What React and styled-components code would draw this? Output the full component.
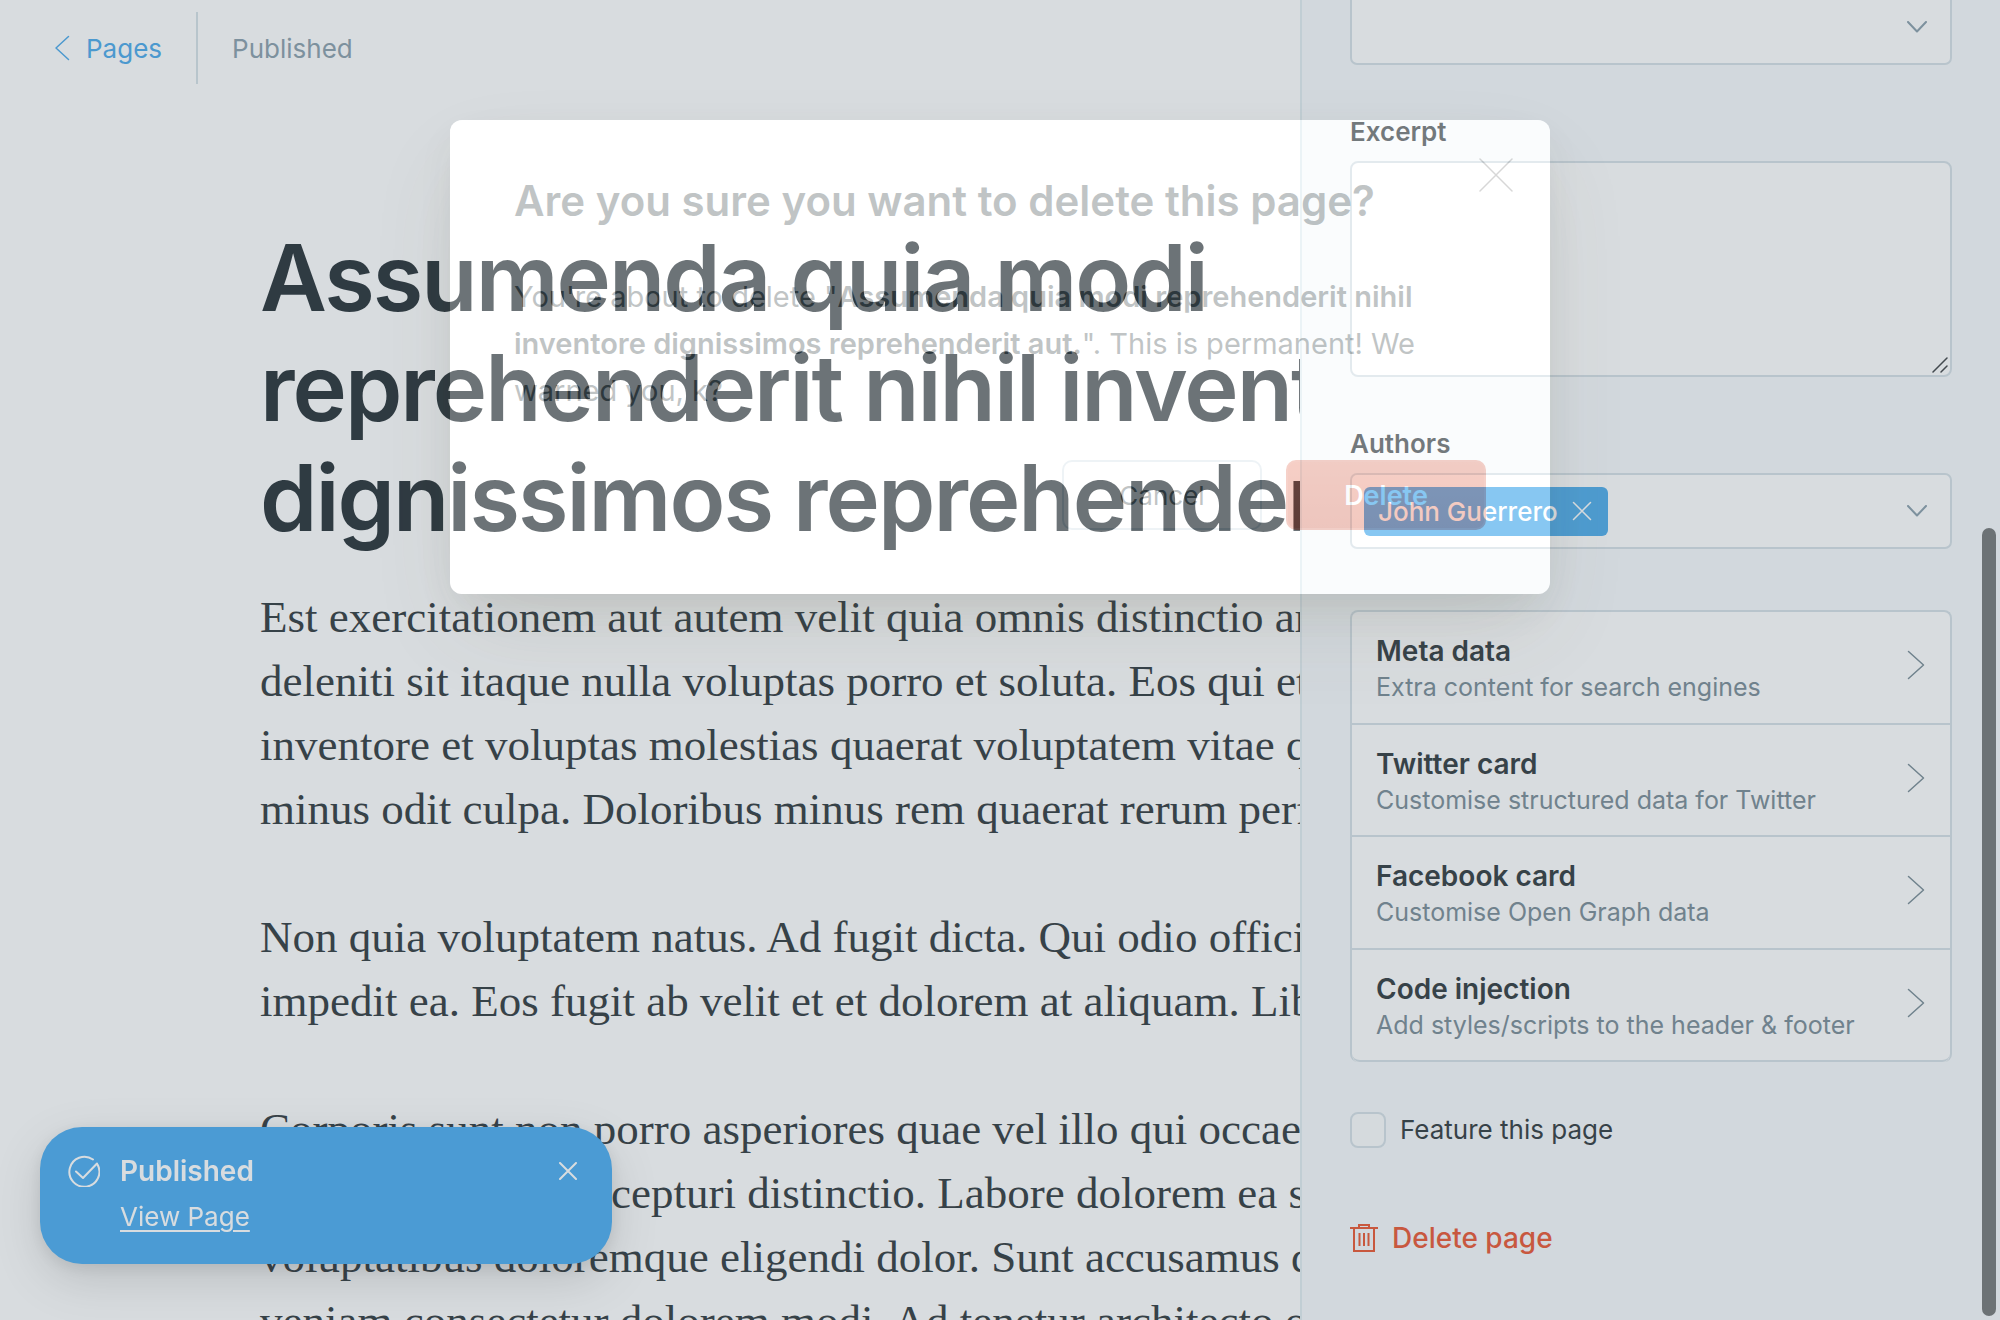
import React from "react";
import styled, { createGlobalStyle } from "styled-components";

const sans = `Inter, "Liberation Sans", sans-serif`;
const serif = `Georgia, "Liberation Serif", serif`;
const ink = "#1a252a";
const line = "#d2dde4";

const Global = createGlobalStyle`
  *, *::before, *::after { box-sizing: border-box; }
  body { margin: 0; background: #fff; font-family: ${sans}; color: ${ink}; }
  h1, h2, p, ul { margin: 0; padding: 0; }
  button, input, select, textarea { font: inherit; color: inherit; margin: 0; padding: 0; }
  button { background: none; border: 0; cursor: pointer; }
`;

const Layout = styled.div`
  display: grid;
  grid-template-columns: minmax(0, 1fr) 700px;
  height: 100vh;
  overflow: hidden;
`;

const Editor = styled.main`
  min-width: 0;
  overflow: hidden;
`;

const TopBar = styled.header`
  display: flex;
  align-items: center;
  height: 72px;
  margin-top: 12px;
  padding-left: 54px;
  font-size: 26px;
`;

const BackLink = styled.a`
  display: flex;
  align-items: center;
  gap: 16px;
  height: 100%;
  padding-right: 34px;
  border-right: 2px solid #d2dfe4;
  color: #38a0e8;
  text-decoration: none;
`;

const Status = styled.span`
  padding-left: 34px;
  color: #7e95a3;
`;

const Article = styled.article`
  padding: 139px 0 0 260px;
  white-space: nowrap;
`;

const Title = styled.h1`
  margin-bottom: 32px;
  color: #101b21;
  font-size: 92px;
  font-weight: 600;
  line-height: 110px;
  letter-spacing: -2px;
`;

const Paragraph = styled.p`
  margin-bottom: 64px;
  font-family: ${serif};
  font-size: 45px;
  line-height: 64px;
`;

const Line = styled.span`
  display: block;
`;

const Sidebar = styled.aside`
  display: flex;
  flex-direction: column;
  justify-content: flex-end;
  padding: 0 48px 64px;
  border-left: 2px solid #dfebf0;
  background: #f7fafc;
  overflow: hidden;
`;

const Field = styled.div`
  display: flex;
  flex-direction: column;
  flex: none;
  gap: 14px;
  margin-bottom: ${(p) => p.$after}px;
`;

const Label = styled.label`
  font-size: 26px;
  font-weight: 600;
  line-height: 30px;
`;

const SelectBox = styled.div`
  position: relative;
  display: flex;
  align-items: center;
  height: 76px;
  border: 2px solid ${line};
  border-radius: 7px;
  background: #fff;
  color: #7e95a3;

  > svg {
    position: absolute;
    right: 23px;
    pointer-events: none;
  }
`;

const Select = styled.select`
  width: 100%;
  height: 100%;
  border: 0;
  background: transparent;
  appearance: none;
`;

const TokenInput = styled.input`
  flex: 1;
  min-width: 0;
  height: 100%;
  border: 0;
  outline: 0;
  background: transparent;
`;

const Chip = styled.span`
  display: flex;
  align-items: center;
  gap: 14px;
  height: 49px;
  margin-left: 12px;
  padding: 0 16px 0 14px;
  border-radius: 6px;
  background: #3ca4ea;
  color: #fff;
  font-size: 26px;
  font-weight: 500;
`;

const IconButton = styled.button`
  display: flex;
  color: inherit;
`;

const Excerpt = styled.textarea`
  display: block;
  width: 100%;
  height: 216px;
  border: 2px solid ${line};
  border-radius: 8px;
  background: #fff;
  resize: none;
`;

const ExcerptBox = styled.div`
  position: relative;
  color: #2c3033;

  > svg {
    position: absolute;
    right: 4px;
    bottom: 4px;
    pointer-events: none;
  }
`;

const PanelList = styled.ul`
  display: grid;
  grid-auto-rows: 1fr;
  flex: none;
  height: 452px;
  margin-bottom: 50px;
  border: 2px solid ${line};
  border-bottom-width: 0;
  border-radius: 8px;
  background: #fff;
  list-style: none;
  overflow: hidden;
`;

const PanelItem = styled.li`
  display: flex;
  border-bottom: 2px solid ${line};

  &:last-child {
    border-radius: 0 0 8px 8px;
  }
`;

const PanelButton = styled.button`
  display: flex;
  align-items: center;
  justify-content: space-between;
  flex: 1;
  padding: 0 25px 4px 24px;
  text-align: left;
  color: #6c808b;
`;

const PanelLabel = styled.span`
  display: flex;
  flex-direction: column;
  padding-top: 8px;
  line-height: 36px;
`;

const PanelTitle = styled.span`
  font-size: 28px;
  font-weight: 600;
  color: ${ink};
`;

const PanelText = styled.span`
  font-size: 25px;
`;

const CheckRow = styled.label`
  display: flex;
  align-items: center;
  flex: none;
  gap: 14px;
  height: 36px;
  margin-bottom: 72px;
  font-size: 26px;
  line-height: 36px;
`;

const Checkbox = styled.input`
  width: 36px;
  height: 36px;
  border: 2px solid ${line};
  border-radius: 8px;
  background: #fbfcfd;
  appearance: none;
`;

const DeleteLink = styled.button`
  display: flex;
  align-items: center;
  align-self: flex-start;
  flex: none;
  gap: 14px;
  height: 36px;
  color: #e8441c;
  font-size: 28px;
  font-weight: 500;
`;

const ScrollThumb = styled.div`
  position: fixed;
  top: 40%;
  right: 4px;
  bottom: 4px;
  width: 14px;
  border-radius: 7px;
  background: #66696a;
`;

const Toast = styled.div`
  position: fixed;
  left: 40px;
  bottom: 56px;
  display: flex;
  align-items: flex-start;
  gap: 20px;
  width: 572px;
  padding: 26px 35px 20px 28px;
  border-radius: 42px;
  background: #38a4f0;
  box-shadow: 0 16px 48px rgba(0, 0, 0, 0.16), 0 4px 16px rgba(0, 0, 0, 0.1);
  color: #fff;
  line-height: 36px;

  > svg, > button {
    margin-top: 2px;
  }
`;

const ToastBody = styled.div`
  display: flex;
  flex-direction: column;
  align-items: flex-start;
  flex: 1;
  gap: 10px;
`;

const ToastTitle = styled.strong`
  font-size: 28px;
  font-weight: 600;
`;

const ToastLink = styled.a`
  margin-bottom: 9px;
  color: inherit;
  font-size: 26px;
  text-underline-offset: 4px;
  text-decoration-thickness: 2px;
`;

const ToastClose = styled(IconButton)`
  height: 32px;
  align-items: center;
`;

const Overlay = styled.div`
  position: fixed;
  inset: 0;
  display: flex;
  align-items: flex-start;
  justify-content: center;
  padding-top: 120px;
  overflow: hidden;
`;

const ModalFrame = styled.div`
  width: 1100px;
  border-radius: 12px;
  box-shadow:
    0 16px 40px -8px rgba(60, 55, 40, 0.1),
    0 40px 90px -10px rgba(90, 85, 60, 0.12),
    0 0 0 4000px rgba(122, 136, 146, 0.295);
`;

const Modal = styled.div`
  position: relative;
  padding: 54px 64px 64px;
  border-radius: 12px;
  background: #fff;
  color: #5d686a;
  opacity: 0.39;
`;

const ModalTitle = styled.h2`
  margin-bottom: 45px;
  font-size: 42px;
  font-weight: 600;
  line-height: 54px;
`;

const ModalText = styled.p`
  margin-bottom: 46px;
  font-size: 29px;
  line-height: 47px;

  b {
    font-weight: 600;
  }
`;

const ModalClose = styled(IconButton)`
  position: absolute;
  top: 38px;
  right: 37px;
  color: #999;
`;

const Actions = styled.div`
  display: flex;
  justify-content: flex-end;
  gap: 24px;
`;

const Action = styled.button`
  width: 200px;
  height: 70px;
  border: 2px solid ${(p) => (p.$danger ? "#e88a75" : "#d3e0e8")};
  border-radius: 10px;
  background: ${(p) => (p.$danger ? "linear-gradient(#e8836c, #de735c)" : "#fff")};
  color: ${(p) => (p.$danger ? "#fff" : "#5d686a")};
  font-size: ${(p) => (p.$danger ? 27 : 26)}px;
  font-weight: ${(p) => (p.$danger ? 600 : 400)};
`;

const Stroke = ({ w, h, d, sw = 2 }) => (
  <svg width={w} height={h} viewBox={`0 0 ${w} ${h}`} fill="none" stroke="currentColor"
    strokeWidth={sw} strokeLinecap="round" strokeLinejoin="round" aria-hidden="true">
    <path d={d} />
  </svg>
);

const Down = () => <Stroke w={20} h={12} d="M1 1l9 9.5L19 1" />;
const Right = () => <Stroke w={18} h={30} d="M1.500 1.500l15 13.500-15 13.500" sw={1.500} />;

const panels = [
  ["Meta data", "Extra content for search engines"],
  ["Twitter card", "Customise structured data for Twitter"],
  ["Facebook card", "Customise Open Graph data"],
  ["Code injection", "Add styles/scripts to the header & footer"],
];

const paragraphs = [
  [
    "Est exercitationem aut autem velit quia omnis distinctio architecto",
    "deleniti sit itaque nulla voluptas porro et soluta. Eos qui et dolores",
    "inventore et voluptas molestias quaerat voluptatem vitae quia",
    "minus odit culpa. Doloribus minus rem quaerat rerum perferendis",
  ],
  [
    "Non quia voluptatem natus. Ad fugit dicta. Qui odio officia nihil",
    "impedit ea. Eos fugit ab velit et et dolorem at aliquam. Libero",
  ],
  [
    "Corporis sunt non porro asperiores quae vel illo qui occaecati",
    "reiciendis quo et excepturi distinctio. Labore dolorem ea sequi",
    "voluptatibus doloremque eligendi dolor. Sunt accusamus dolor",
    "veniam consectetur dolorem modi. Ad tenetur architecto omnis",
  ],
];

export default function App() {
  return (
    <>
      <Global />
      <Layout>
        <Editor>
          <TopBar>
            <BackLink href="#pages">
              <Stroke w={16} h={26} d="M14.500 1.500L2 13l12.500 11.500" sw={1.500} />
              Pages
            </BackLink>
            <Status>Published</Status>
          </TopBar>
          <Article>
            <Title>
              <Line>Assumenda quia modi</Line>
              <Line>reprehenderit nihil inventore</Line>
              <Line>dignissimos reprehenderit aut.</Line>
            </Title>
            {paragraphs.map((lines) => (
              <Paragraph key={lines[0]}>
                {lines.map((text) => <Line key={text}>{text}</Line>)}
              </Paragraph>
            ))}
          </Article>
        </Editor>

        <Sidebar>
          <Field $after={52}>
            <SelectBox>
              <Select aria-label="Page access" defaultValue="">
                <option value=""></option>
              </Select>
              <Down />
            </SelectBox>
          </Field>
          <Field $after={52}>
            <Label htmlFor="excerpt">Excerpt</Label>
            <ExcerptBox>
              <Excerpt id="excerpt" />
              <Stroke w={16} h={16} d="M1 15L15 1M9 15l6-6" sw={1.500} />
            </ExcerptBox>
          </Field>
          <Field $after={61}>
            <Label htmlFor="authors">Authors</Label>
            <SelectBox>
              <Chip>
                John Guerrero
                <IconButton aria-label="Remove John Guerrero">
                  <Stroke w={20} h={20} d="M1.500 1.500l17 17m0-17l-17 17" sw={1.500} />
                </IconButton>
              </Chip>
              <TokenInput id="authors" />
              <Down />
            </SelectBox>
          </Field>
          <PanelList>
            {panels.map(([title, text]) => (
              <PanelItem key={title}>
                <PanelButton>
                  <PanelLabel>
                    <PanelTitle>{title}</PanelTitle>
                    <PanelText>{text}</PanelText>
                  </PanelLabel>
                  <Right />
                </PanelButton>
              </PanelItem>
            ))}
          </PanelList>
          <CheckRow>
            <Checkbox type="checkbox" />
            Feature this page
          </CheckRow>
          <DeleteLink>
            <svg width="28" height="28" viewBox="0 0 28 28" fill="none" stroke="currentColor" strokeWidth="2" aria-hidden="true">
              <path d="M0 4h28M9 4V1h10v3M4 4v23h20V4M9.500 9v13M14 9v13M18.500 9v13" />
            </svg>
            Delete page
          </DeleteLink>
        </Sidebar>
      </Layout>

      <ScrollThumb />

      <Toast role="status">
        <svg width="32" height="32" viewBox="0 0 32 32" fill="none" stroke="currentColor" strokeWidth="2" strokeLinecap="round" strokeLinejoin="round" aria-hidden="true">
          <path d="M25 4.500A15 15 0 1 0 29.500 9.500M8 16.500l7 6.500L29 8.500" />
        </svg>
        <ToastBody>
          <ToastTitle>Published</ToastTitle>
          <ToastLink href="#view">View Page</ToastLink>
        </ToastBody>
        <ToastClose aria-label="Dismiss">
          <Stroke w={18} h={18} d="M1 1l16 16M17 1L1 17" />
        </ToastClose>
      </Toast>

      <Overlay>
        <ModalFrame role="dialog" aria-modal="true" aria-labelledby="modal-title">
          <Modal>
            <ModalTitle id="modal-title">Are you sure you want to delete this page?</ModalTitle>
            <ModalClose aria-label="Close">
              <Stroke w={34} h={34} d="M1 1l32 32M33 1L1 33" sw={1.500} />
            </ModalClose>
            <ModalText>
              You're about to delete "<b>Assumenda quia modi reprehenderit nihil inventore
              dignissimos reprehenderit aut.</b>". This is permanent! We warned you, k?
            </ModalText>
            <Actions>
              <Action>Cancel</Action>
              <Action $danger>Delete</Action>
            </Actions>
          </Modal>
        </ModalFrame>
      </Overlay>
    </>
  );
}
